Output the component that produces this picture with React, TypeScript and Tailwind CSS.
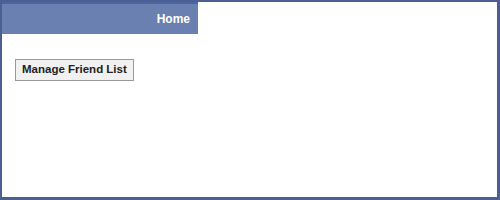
export default function App() {
  return (
    <div className="h-[200px] w-[500px] border-t-2 border-l-2 border-r-[3px] border-b-[3px] border-[#4b5f92] bg-white font-['Liberation_Sans',Tahoma,sans-serif]">
      <div className="flex h-8 w-[196px] items-center justify-end border-t-2 border-[#4c64a0] bg-[#6a80b1] pr-2">
        <span className="text-[12px] font-bold text-white">Home</span>
      </div>
      <div className="px-[13px] pt-[22px]">
        <button className="h-[22px] border border-[#9a9a9a] bg-[#f1f1f1] px-[6px] text-[11.5px] font-bold text-[#222]">
          Manage Friend List
        </button>
      </div>
    </div>
  );
}
